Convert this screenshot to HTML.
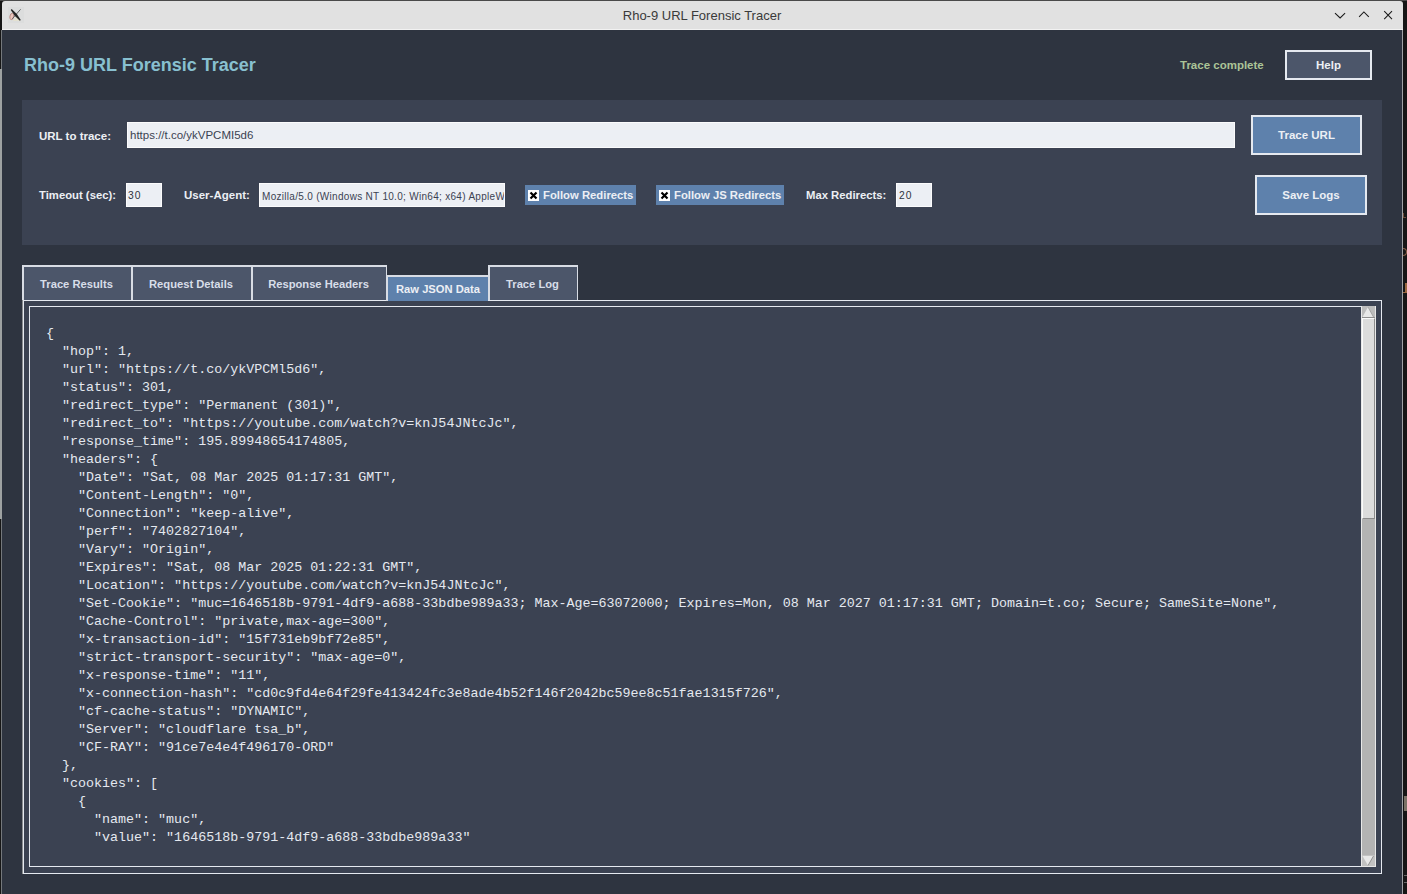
<!DOCTYPE html>
<html><head><meta charset="utf-8">
<style>
*{margin:0;padding:0;box-sizing:border-box}
html,body{width:1407px;height:894px;overflow:hidden;background:#161616}
body{position:relative;font-family:"Liberation Sans",sans-serif}
.a{position:absolute}
#win{left:2px;top:29px;width:1401px;height:865px;background:#2e3440;border-right:1px solid #a0a2a6}
#tb{left:2px;top:1px;width:1401px;height:29px;background:#e1e1e1;border-radius:3px 3px 0 0;border-bottom:1px solid #f2f2f2}
#tbt{left:-1px;top:0;width:1402px;height:28px;line-height:29px;text-align:center;font-size:13px;color:#3a3a3a}
.b{font-weight:bold;font-size:11.5px;color:#eceff4;white-space:nowrap}
.ent{background:#eceff4;border:1px solid #fbfbfc}
.btn{background:#5e81ac;border:2px solid #e5e9f0;text-align:center;color:#eceff4;font-weight:bold;font-size:11.5px}
.tab{background:#4c566a;border-top:2px solid #d8dce4;border-left:2px solid #d8dce4;text-align:center;padding-right:2px;color:#d8dee9;font-weight:bold;font-size:11.2px}
.cb{background:#fff;width:11px;height:11px}
pre{font-family:"Liberation Mono",monospace;font-size:13.35px;line-height:18px;color:#e5e9f0}
</style></head><body>
<div class="a" style="left:0;top:0;width:1407px;height:1px;background:#4a4a4a"></div>
<div class="a" style="left:1px;top:30px;width:1px;height:864px;background:#74787c"></div>
<div class="a" style="left:0;top:69px;width:2px;height:450px;background:#9ea2a2"></div>
<div id="win" class="a"></div>
<div id="tb" class="a"><div id="tbt" class="a">Rho-9 URL Forensic Tracer</div></div>
<!-- title bar icons -->
<svg class="a" style="left:0;top:0" width="1407" height="30">
  <rect x="8" y="7" width="16" height="16" fill="#dcdddd"/>
  <path d="M13 21 L20.5 21 L17 15.5 Z" fill="#e4e1d0"/>
  <ellipse cx="11.8" cy="16.5" rx="1.9" ry="3.2" transform="rotate(12 11.8 16.5)" fill="#eac6bd" stroke="#b5847c" stroke-width="0.8"/>
  <path d="M20.6 9.3 L12.3 18.8" stroke="#555" stroke-width="0.9"/>
  <path d="M11.66 9.11 L16.82 14 L20.76 19.91 L19.84 20.69 L14.68 15.8 L10.74 9.89 Z" fill="#242424"/>
  <path d="M1335 13.2 L1340.1 18 L1345.1 13.2" stroke="#1a1a1a" stroke-width="1.05" fill="none"/>
  <path d="M1359.1 16.9 L1363.9 12 L1368.8 16.9" stroke="#1a1a1a" stroke-width="1.05" fill="none"/>
  <path d="M1384.2 11.1 L1392 19.1 M1392 11.1 L1384.2 19.1" stroke="#1a1a1a" stroke-width="1.05" fill="none"/>
</svg>

<!-- desktop fragments -->
<div class="a" style="left:1403px;top:213px;width:3px;height:5px;border-left:1px solid #6a4a38;border-bottom:1px solid #6a4a38"></div>
<div class="a" style="left:1403px;top:248px;width:4px;height:8px;border:1px solid #8a6048;border-left:none;border-radius:0 4px 4px 0"></div>
<div class="a" style="left:1403px;top:283px;width:4px;height:10px;border-right:2px solid #9a6840;border-bottom:1px solid #9a6840"></div>
<div class="a" style="left:1404px;top:796px;width:3px;height:15px;background:#7a7266"></div>
<div class="a" style="left:1404px;top:875px;width:3px;height:1px;background:#666"></div>
<div class="a" style="left:1404px;top:882px;width:3px;height:1px;background:#666"></div>
<!-- header -->
<div class="a" style="left:24px;top:55px;font-size:18px;font-weight:bold;color:#88c0d0;white-space:nowrap">Rho-9 URL Forensic Tracer</div>
<div class="a b" style="left:1180px;top:59px;color:#abc497">Trace complete</div>
<div class="a btn" style="left:1285px;top:50px;width:87px;height:30px;line-height:26px;background:#4c566a">Help</div>

<!-- control frame -->
<div class="a" style="left:22px;top:100px;width:1360px;height:145px;background:#3b4252"></div>
<div class="a b" style="left:39px;top:130px">URL to trace:</div>
<div class="a ent" style="left:127px;top:122px;width:1108px;height:26px"></div>
<div class="a" style="left:130px;top:129px;font-size:11.5px;color:#3b4252;white-space:nowrap">https://t.co/ykVPCMI5d6</div>
<div class="a btn" style="left:1251px;top:115px;width:111px;height:40px;line-height:37px">Trace URL</div>

<div class="a b" style="left:39px;top:189px;font-size:11.3px">Timeout (sec):</div>
<div class="a ent" style="left:126px;top:183px;width:36px;height:24px"></div>
<div class="a" style="left:128px;top:190px;font-size:10.3px;letter-spacing:0.9px;color:#2e3440">30</div>
<div class="a b" style="left:184px;top:189px">User-Agent:</div>
<div class="a ent" style="left:259px;top:183px;width:246px;height:24px;overflow:hidden"><div class="a" style="left:2px;top:7px;font-size:10px;color:#3b4252;white-space:nowrap;letter-spacing:0.3px">Mozilla/5.0 (Windows NT 10.0; Win64; x64) AppleWebKit</div></div>
<div class="a" style="left:525px;top:185px;width:111px;height:20px;background:#5e81ac"></div>
<div class="a cb" style="left:528px;top:190px"></div>
<svg class="a" style="left:528px;top:190px" width="11" height="11"><path d="M2.5 2.5 L8.5 8.5 M8.5 2.5 L2.5 8.5" stroke="#000" stroke-width="2.2"/></svg>
<div class="a b" style="left:543px;top:189px;font-size:11.3px">Follow Redirects</div>
<div class="a" style="left:656px;top:185px;width:128px;height:20px;background:#5e81ac"></div>
<div class="a cb" style="left:659px;top:190px"></div>
<svg class="a" style="left:659px;top:190px" width="11" height="11"><path d="M2.5 2.5 L8.5 8.5 M8.5 2.5 L2.5 8.5" stroke="#000" stroke-width="2.2"/></svg>
<div class="a b" style="left:674px;top:189px;font-size:11.3px">Follow JS Redirects</div>
<div class="a b" style="left:806px;top:189px;font-size:11.3px">Max Redirects:</div>
<div class="a ent" style="left:896px;top:183px;width:36px;height:24px"></div>
<div class="a" style="left:899px;top:190px;font-size:10.3px;letter-spacing:0.9px;color:#2e3440">20</div>
<div class="a btn" style="left:1255px;top:175px;width:112px;height:40px;line-height:36px">Save Logs</div>

<!-- notebook -->
<div class="a" style="left:23px;top:300px;width:1359px;height:574px;background:#3b4252;border:1px solid #e5e9f0;box-shadow:-1px 0 0 #8a8d90"></div>
<div class="a" style="left:29px;top:306px;width:1333px;height:561px;background:#3b4252;border:1px solid #e5e9f0"></div>
<!-- scrollbar -->
<div class="a" style="left:1361px;top:306px;width:15px;height:561px;background:#b3b3b3;border-left:1px solid #e8e8e8;border-right:1px solid #e8e8e8;border-bottom:1px solid #e8e8e8"></div>
<div class="a" style="left:1362px;top:306px;width:13px;height:12px;background:#bdbdbd"></div>
<div class="a" style="left:1362px;top:317px;width:13px;height:1px;background:#8e8e8e"></div><svg class="a" style="left:1362px;top:306px" width="13" height="12"><path d="M6 1 L11.5 11 L0.5 11 Z" fill="#e8e8e8"/><path d="M6 1 L11.5 11" stroke="#9a9a9a" stroke-width="0.8"/></svg>
<div class="a" style="left:1362px;top:318px;width:13px;height:201px;background:#dcdcdc;border-top:1px solid #fafafa;border-left:1px solid #fafafa;border-right:1px solid #8c8c8c;border-bottom:1px solid #8c8c8c"></div>
<div class="a" style="left:1362px;top:855px;width:13px;height:11px;background:#c2c2c2"></div>
<svg class="a" style="left:1362px;top:855px" width="13" height="11"><path d="M0.5 1 L11.5 1 L6 10.5 Z" fill="#e8e8e8"/><path d="M11.5 1 L6 10.5" stroke="#8a8a8a" stroke-width="0.9"/></svg>

<div class="a tab" style="left:22px;top:265px;width:109px;height:35px;line-height:34px">Trace Results</div>
<div class="a tab" style="left:131px;top:265px;width:120px;height:35px;line-height:34px">Request Details</div>
<div class="a tab" style="left:251px;top:265px;width:136px;height:35px;line-height:34px;border-right:1px solid #d8dce4">Response Headers</div>
<div class="a" style="left:23px;top:300px;width:365px;height:1px;background:#e5e9f0"></div>
<div class="a" style="left:488px;top:300px;width:894px;height:1px;background:#e5e9f0"></div>
<div class="a tab" style="left:386px;top:275px;width:102px;height:26px;line-height:24px;background:#5e81ac;color:#eceff4;padding-right:0">Raw JSON Data</div>
<div class="a tab" style="left:488px;top:265px;width:90px;height:35px;line-height:34px;border-right:1px solid #d8dce4">Trace Log</div>

<pre class="a" style="left:46px;top:325px">{
  "hop": 1,
  "url": "https://t.co/ykVPCMl5d6",
  "status": 301,
  "redirect_type": "Permanent (301)",
  "redirect_to": "https://youtube.com/watch?v=knJ54JNtcJc",
  "response_time": 195.89948654174805,
  "headers": {
    "Date": "Sat, 08 Mar 2025 01:17:31 GMT",
    "Content-Length": "0",
    "Connection": "keep-alive",
    "perf": "7402827104",
    "Vary": "Origin",
    "Expires": "Sat, 08 Mar 2025 01:22:31 GMT",
    "Location": "https://youtube.com/watch?v=knJ54JNtcJc",
    "Set-Cookie": "muc=1646518b-9791-4df9-a688-33bdbe989a33; Max-Age=63072000; Expires=Mon, 08 Mar 2027 01:17:31 GMT; Domain=t.co; Secure; SameSite=None",
    "Cache-Control": "private,max-age=300",
    "x-transaction-id": "15f731eb9bf72e85",
    "strict-transport-security": "max-age=0",
    "x-response-time": "11",
    "x-connection-hash": "cd0c9fd4e64f29fe413424fc3e8ade4b52f146f2042bc59ee8c51fae1315f726",
    "cf-cache-status": "DYNAMIC",
    "Server": "cloudflare tsa_b",
    "CF-RAY": "91ce7e4e4f496170-ORD"
  },
  "cookies": [
    {
      "name": "muc",
      "value": "1646518b-9791-4df9-a688-33bdbe989a33"</pre>

</body></html>
